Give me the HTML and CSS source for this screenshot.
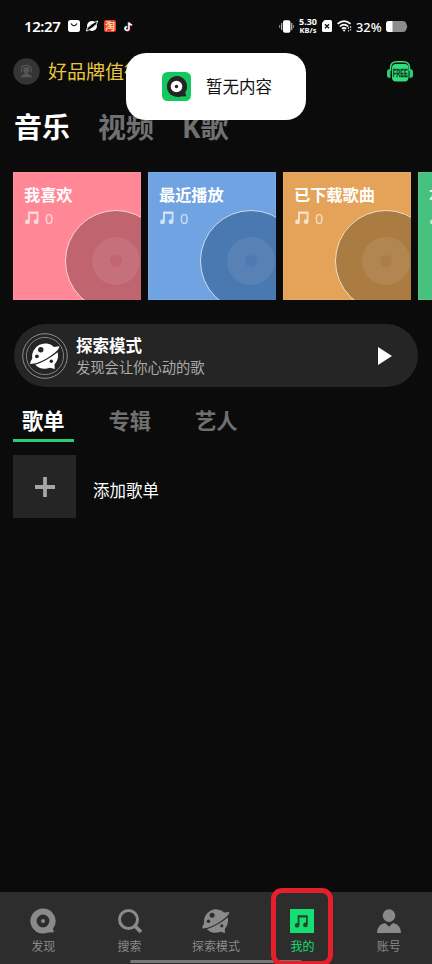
FILE: index.html
```html
<!DOCTYPE html>
<html lang="zh-CN">
<head>
<meta charset="utf-8">
<title>我的音乐</title>
<link rel="stylesheet" href="styles.css">
</head>
<body>
<svg class="defs" width="0" height="0">
  <symbol id="note" viewBox="0 0 14 14">
    <path fill="currentColor" fill-rule="evenodd" d="M3 .5H13.5V10.6A2.4 2.4 0 1 1 11.7 8.3V3H4.9V11A2.4 2.4 0 1 1 3 8.6Z"/>
  </symbol>
  <symbol id="disc" viewBox="0 0 102 102">
    <circle cx="51" cy="51" r="50.5" fill="currentColor" stroke="#fff" stroke-opacity=".7" stroke-width="1"/>
    <circle cx="51" cy="51" r="24" fill="#fff" fill-opacity=".08"/>
    <circle cx="51" cy="51" r="6" fill="currentColor" fill-opacity=".8"/>
  </symbol>
  <symbol id="planet" viewBox="0 0 30 28">
    <mask id="holes">
      <rect width="30" height="28" fill="#fff"/>
      <circle cx="10.8" cy="7.8" r="2.7" fill="#000"/><circle cx="6.9" cy="14.3" r="1.9" fill="#000"/><circle cx="21.3" cy="19.2" r="1.7" fill="#000"/>
    </mask>
    <g mask="url(#holes)" fill="currentColor">
      <path d="M2.3 16.5A13 13 0 0 1 24 4.9L29.3 4.3Q29.5 7 25 10.5Q16 18 6 21.2L.3 22Q-.3 20.3 2.3 16.5Z"/>
      <path d="M5.3 22.8Q17 19 27.6 10.3Q29.3 17 24.5 22.5L24.8 27L20 25.7Q11 28.7 5.3 22.8Z"/>
    </g>
  </symbol>
</svg>
<main class="screen">
  <header class="status">
    <span class="clock">12:27</span>
    <svg class="s-bag" viewBox="0 0 12 12"><rect width="12" height="12" rx="2.5" fill="#fff"/><path d="M3 3.5Q6 8 9 3.5" fill="none" stroke="#111" stroke-width="1.2"/></svg>
    <svg class="s-planet" viewBox="0 0 12 12"><circle cx="6" cy="6" r="5" fill="#fff"/><path d="M.3 11Q0 8 5.5 4.3T11.7 1Q12 4 6.5 7.7T.3 11Z" fill="#0b0b0b" stroke="#fff" stroke-width=".9"/></svg>
    <span class="s-tao">淘</span>
    <svg class="s-tik" viewBox="0 0 10 12"><g fill="none" stroke-width="1.8"><path d="M5 1.2V8A2.1 2.1 0 1 1 3 6M5 1.5Q6 4 8.6 4" stroke="#25d5df"/><path d="M6 1.8V8.5A2.1 2.1 0 1 1 3.7 6.5M6 2Q7 4.5 9.3 4.5" stroke="#e34"/><path d="M5.5 1.5V8.2A2.1 2.1 0 1 1 3.4 6.2M5.5 1.8Q6.5 4.2 9 4.2" stroke="#fff" stroke-width="1.5"/></g></svg>
    <span class="spacer"></span>
    <svg class="s-vib" viewBox="0 0 15 13"><rect x="4" y=".3" width="7.4" height="12.4" rx="1.8" fill="#fff"/><path d="M2.7 3V10M12.7 3V10" stroke="#bbb" stroke-width="1.2"/><path d="M.7 5V8M14.4 5V8" stroke="#999"/></svg>
    <span class="speed"><b>5.30</b><b>KB/s</b></span>
    <svg class="s-sim" viewBox="0 0 10 12"><path d="M2.7 0H8.5Q10 0 10 1.5V10.5Q10 12 8.5 12H1.5Q0 12 0 10.5V2.7Z" fill="#fff"/><path d="M3 4.3L7 8.3M7 4.3L3 8.3" stroke="#111" stroke-width="1.3"/></svg>
    <svg class="s-wifi" viewBox="0 0 15 12"><g fill="none" stroke="#fff" stroke-width="1.6"><path d="M.6 3.9Q7 -1.7 13.6 3.9"/><path d="M2.8 6.5Q7 2.9 11.4 6.5"/><path d="M4.8 8.7Q7 7 9.3 8.7"/></g><path d="M5.4 9.7H8.8L7.1 11.8Z" fill="#fff"/><path d="M11.5 7V11.5M13.6 6V10.5" stroke="#bbb" stroke-width="1.2" stroke-dasharray="2 1"/></svg>
    <span class="percent">32%</span>
    <svg class="s-bat" viewBox="0 0 22 11"><rect width="20" height="11" rx="3" fill="#8c8c8c"/><path d="M19 1Q23.5 5.5 19 10Z" fill="#8c8c8c"/><path d="M6.5 0H3Q0 0 0 3V8Q0 11 3 11H6.5Z" fill="#fff"/></svg>
  </header>

  <section class="promo">
    <svg class="avatar" viewBox="0 0 27 27"><circle cx="13.5" cy="13.5" r="13.2" fill="#353535"/><path d="M8.4 14.5V12Q8.4 7.4 13.3 7.4T18.2 12V14.5" fill="none" stroke="#565656" stroke-width="1.2"/><circle cx="13.3" cy="12" r="3" fill="#565656"/><path d="M7.5 19.2Q8 16.8 11.8 16V14H14.8V16Q18.6 16.8 19.2 19.2Z" fill="#565656"/></svg>
    <span class="promo-text">好品牌值得</span>
    <svg class="free" viewBox="0 0 26 21"><path d="M3.5 10V7Q3.5 .8 10 .8H16Q22.5 .8 22.5 7V10" fill="none" stroke="#35dc7b" stroke-width="1.5"/><rect x="5" y="3" width="16.5" height="17.5" rx="4" fill="#35dc7b"/><path d="M3.5 8V17Q0 17 0 14.5V10.5Q0 8.4 3.5 8ZM22.5 8V17Q26 17 26 14.5V10.5Q26 8.4 22.5 8Z" fill="#29cf70"/><text x="5.8" y="15.8" textLength="14.8" lengthAdjust="spacingAndGlyphs" class="free-label">FREE</text></svg>
  </section>

  <nav class="top-tabs"><span class="on">音乐</span><span>视频</span><span>K歌</span></nav>

  <section class="cards">
    <article class="card pink"><h2>我喜欢</h2><p><svg class="n"><use href="#note"/></svg>0</p><svg class="disc"><use href="#disc"/></svg></article>
    <article class="card blue"><h2>最近播放</h2><p><svg class="n"><use href="#note"/></svg>0</p><svg class="disc"><use href="#disc"/></svg></article>
    <article class="card orange"><h2>已下载歌曲</h2><p><svg class="n"><use href="#note"/></svg>0</p><svg class="disc"><use href="#disc"/></svg></article>
    <article class="card green"><h2>本地歌曲</h2><p><svg class="n"><use href="#note"/></svg>0</p><svg class="disc"><use href="#disc"/></svg></article>
  </section>

  <section class="explore">
    <svg class="orbit" viewBox="0 0 46 46"><circle cx="23" cy="23" r="22.3" fill="none" stroke="#aaa" stroke-width=".8"/><circle cx="23" cy="23" r="18.6" fill="none" stroke="#999" stroke-width=".8"/><use href="#planet" x="8" y="9" width="30" height="28"/></svg>
    <div class="explore-text"><h3>探索模式</h3><p>发现会让你心动的歌</p></div>
    <svg class="play" viewBox="0 0 14 18"><path d="M0 0L14 9L0 18Z" fill="#fff"/></svg>
  </section>

  <nav class="sub-tabs"><span class="on">歌单</span><span>专辑</span><span>艺人</span></nav>

  <section class="add">
    <div class="add-box"><svg class="plus" viewBox="0 0 20 20"><path d="M10 0V20M0 10H20" stroke="#a5a5a5" stroke-width="3.8"/></svg></div>
    <span>添加歌单</span>
  </section>

  <footer class="bottom">
    <div class="item"><svg class="i" viewBox="0 0 26 26"><path fill="currentColor" fill-rule="evenodd" d="M13 .5A12.5 12.5 0 1 0 18 24.4L24 24.2L22.9 20.7A12.5 12.5 0 0 0 13 .5ZM13 6.6A6.4 6.4 0 1 1 13 19.4A6.4 6.4 0 0 1 13 6.6Z"/><circle cx="13" cy="13" r="2" fill="currentColor"/></svg><span>发现</span></div>
    <div class="item"><svg class="i" viewBox="0 0 26 26"><circle cx="11.5" cy="11.5" r="9" fill="none" stroke="currentColor" stroke-width="3"/><path d="M17.8 17.8L24 24" stroke="currentColor" stroke-width="3.8"/></svg><span>搜索</span></div>
    <div class="item"><svg class="i planet-i"><use href="#planet"/></svg><span>探索模式</span></div>
    <div class="item on"><svg class="i" viewBox="0 0 26 26"><rect x="1" y="1" width="24" height="24" fill="#15df70"/><g color="#21442f"><use href="#note" x="5.5" y="6.7" width="14" height="13.5"/></g></svg><span>我的</span></div>
    <div class="item"><svg class="i" viewBox="0 0 26 26"><circle cx="13" cy="7.6" r="6.3" fill="currentColor"/><path d="M1 25Q1 16.5 9 15L13 18.8L17 15Q25 16.5 25 25Z" fill="currentColor"/></svg><span>账号</span></div>
    <div class="home-bar"></div>
    <div class="marker"></div>
  </footer>

  <aside class="toast">
    <svg class="logo" viewBox="0 0 29 29"><rect width="29" height="29" rx="5.5" fill="#13c95f"/><path d="M14.5 4A10.5 10.5 0 1 0 18.8 24.4L24.4 24.3L23.2 20.5A10.5 10.5 0 0 0 14.5 4Z" fill="#252525"/><circle cx="14.5" cy="14.5" r="5.8" fill="#fff"/><circle cx="14.5" cy="14.5" r="1.7" fill="#222"/></svg>
    <span>暂无内容</span>
  </aside>
</main>
</body>
</html>
```

FILE: styles.css
```css
* { box-sizing: border-box; margin: 0; padding: 0; }
body { background: #0b0b0b; color: #fff; font-family: "Noto Sans", "Noto Sans CJK SC", sans-serif; }
svg { display: block; flex: none; }
.defs { position: absolute; }
.screen { position: relative; width: 432px; height: 964px; overflow: hidden; display: flex; flex-direction: column; }
.screen span { white-space: nowrap; }

.status { height: 52px; padding: 0 24px; display: flex; align-items: center; flex: none; }
.clock { width: 44px; font: 600 15px/20px "Noto Sans", sans-serif; letter-spacing: -.4px; }
.s-bag { width: 12px; height: 12px; }
.s-planet { width: 12px; height: 12px; margin-left: 6px; }
.s-tao { width: 12px; height: 12px; margin-left: 6px; border-radius: 2px; background: #e8402f; color: #ffd9a0; font: 700 10px/11px "Noto Sans CJK SC", sans-serif; text-align: center; }
.s-tik { width: 9px; height: 11px; margin-left: 8px; }
.spacer { flex: 1; }
.s-vib { width: 15px; height: 13px; }
.speed { width: 20px; margin-left: 4px; display: flex; flex-direction: column; align-items: center; }
.speed b { font: 700 7.5px/8px "Noto Sans", sans-serif; }
.speed b:first-child { font-size: 9px; }
.s-sim { width: 10px; height: 12px; margin-left: 4px; }
.s-wifi { width: 15px; height: 12px; margin-left: 5px; }
.percent { width: 26px; margin: 0 4px; padding-top: 1px; font: 500 12.8px/20px "Noto Sans", sans-serif; }
.s-bat { width: 22px; height: 11px; }

.promo { height: 38px; padding: 0 19px 0 13px; display: flex; align-items: center; flex: none; }
.avatar { width: 27px; height: 27px; }
.promo-text { margin-left: 8px; padding-top: 2px; font-size: 19px; line-height: 28px; color: #e9c63f; flex: 1; }
.free { width: 26px; height: 21px; margin-top: 1px; }
.free-label { font: 700 10px "Liberation Sans", sans-serif; fill: #073f20; stroke: #073f20; stroke-width: .3px; }

.top-tabs { height: 82px; padding: 17px 0 0 14px; display: flex; gap: 28px; font-size: 28px; font-weight: 700; line-height: 40px; color: #707070; flex: none; }
.top-tabs .on, .sub-tabs .on { color: #fff; }

.cards { height: 128px; padding-left: 13px; display: flex; gap: 7px; flex: none; }
.card { position: relative; width: 128px; height: 128px; padding: 12px 0 0 11px; overflow: hidden; flex: none; box-shadow: inset 0 0 0 1px rgba(255,255,255,.08); }
.card h2 { font-size: 16.2px; line-height: 22px; white-space: nowrap; }
.card p { display: flex; align-items: center; gap: 6px; margin: 1px 0 0 1px; font-size: 14.5px; line-height: 22px; color: rgba(255,255,255,.68); }
.n { width: 14px; height: 14px; }
.disc { position: absolute; left: 52px; top: 38px; width: 102px; height: 102px; }
.pink { background: #ff8796; }
.pink .disc { color: #c0646f; }
.blue { background: #6fa3e2; }
.blue .disc { color: #4a78b0; }
.orange { background: #e4a358; }
.orange .disc { color: #ab7c42; }
.green { background: #47c27e; }
.green .disc { color: #35915e; }

.explore { height: 63px; margin: 24px 14px 0; padding: 0 26px 0 8px; border-radius: 32px; background: #252525; display: flex; align-items: center; flex: none; }
.orbit { width: 46px; height: 46px; }
.explore-text { flex: 1; margin-left: 8px; padding-top: 2px; }
.explore-text h3 { font-size: 16.5px; line-height: 22px; }
.explore-text p { font-size: 14.3px; line-height: 21px; color: #aaa; }
.play { width: 14px; height: 18px; }

.sub-tabs { height: 55px; margin-top: 13px; padding-left: 13px; display: flex; gap: 26px; font-size: 21.3px; font-weight: 700; line-height: 42px; color: #707070; flex: none; }
.sub-tabs span { width: 60.5px; height: 42px; text-align: center; }
.sub-tabs .on { border-bottom: 3px solid #2fca76; }

.add { padding-left: 13px; display: flex; align-items: center; gap: 17px; font-size: 16.5px; line-height: 24px; }
.add span { padding-top: 8px; }
.add-box { width: 63px; height: 63px; background: #252525; display: grid; place-items: center; }
.plus { width: 20px; height: 20px; }

.bottom { position: relative; height: 72px; margin-top: auto; background: #2d2d2d; display: grid; grid-template-columns: repeat(5, 1fr); color: #8a8a8a; flex: none; }
.item { display: flex; flex-direction: column; align-items: center; padding-top: 16px; font-size: 12px; line-height: 18px; }
.item span { margin-top: 4px; }
.item.on { color: #15df70; }
.i { width: 26px; height: 26px; }
.planet-i { width: 28px; }
.home-bar { position: absolute; left: 130px; bottom: 1px; width: 172px; height: 3px; border-radius: 2px; background: #777; }
.marker { position: absolute; left: 271px; top: -4px; width: 62px; height: 78px; border: 5px solid #e51f2b; border-radius: 11px; }

.toast { position: absolute; left: 126px; top: 53px; width: 180px; height: 67px; padding-left: 36px; border-radius: 20px; background: #fff; color: #111; display: flex; align-items: center; gap: 15px; font-size: 16.5px; line-height: 24px; }
.toast span { padding-top: 1px; }
.logo { width: 29px; height: 29px; }
```
